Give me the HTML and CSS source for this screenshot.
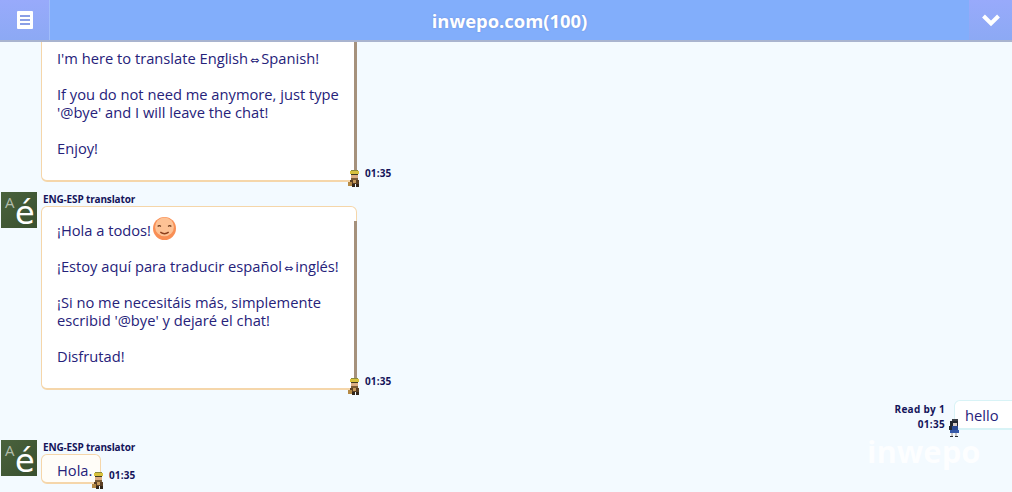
FILE: index.html
```html
<!DOCTYPE html>
<html lang="en">
<head>
    <meta charset="UTF-8">
    <meta name="viewport" content="width=device-width, initial-scale=1.0">
    <title>inwepo.com</title>
    <link rel="stylesheet" href="styles.css">
</head>
<body>
    <!-- little characters shown next to each message -->
    <svg class="defs" width="0" height="0">
        <symbol id="bot-sprite" viewBox="0 0 12 17">
            <rect x="3" y="0" width="7" height="1" fill="#8d8a3a"/>
            <rect x="2" y="1" width="9" height="3" fill="#d8c23e"/>
            <rect x="3" y="4" width="7" height="1" fill="#3d3a20"/>
            <rect x="3" y="5" width="7" height="3" fill="#dcae84"/>
            <rect x="3" y="8" width="7" height="2" fill="#7a5a34"/>
            <rect x="2" y="10" width="9" height="4" fill="#5a3f24"/>
            <rect x="5" y="10" width="3" height="3" fill="#c79a5c"/>
            <rect x="0" y="12" width="4" height="4" fill="#b58a46"/>
            <rect x="4" y="14" width="3" height="3" fill="#33261a"/>
            <rect x="8" y="14" width="3" height="3" fill="#33261a"/>
        </symbol>
        <symbol id="own-sprite" viewBox="0 0 12 18">
            <rect x="4" y="0" width="6" height="2" fill="#3a3f46"/>
            <rect x="2" y="2" width="8" height="5" fill="#23282f"/>
            <rect x="5" y="4" width="4" height="3" fill="#d9cfc8"/>
            <rect x="1" y="7" width="3" height="4" fill="#23282f"/>
            <rect x="4" y="7" width="6" height="5" fill="#2a4a92"/>
            <rect x="2" y="11" width="9" height="3" fill="#3558a8"/>
            <rect x="3" y="14" width="2" height="3" fill="#c8c4c4"/>
            <rect x="7" y="14" width="2" height="3" fill="#c8c4c4"/>
            <rect x="2" y="17" width="3" height="1" fill="#2b2f36"/>
            <rect x="7" y="17" width="3" height="1" fill="#2b2f36"/>
        </symbol>
    </svg>

    <header class="topbar">
        <button class="topbar-btn" aria-label="Menu">
            <svg width="16" height="18" viewBox="0 0 16 18">
                <rect width="16" height="18" rx="1" fill="#fff"/>
                <path d="M3 5h10M3 9h10M3 13h10" stroke="#8a9fe6" stroke-width="2"/>
            </svg>
        </button>
        <h1 class="topbar-title">inwepo.com(100)</h1>
        <button class="topbar-btn" aria-label="Collapse">
            <svg width="20" height="14" viewBox="0 0 20 14">
                <path d="M2.5 3L10 10.5L17.5 3" fill="none" stroke="#fff" stroke-width="4"/>
            </svg>
        </button>
    </header>

    <main class="chat">
        <div class="msg">
            <div class="avatar"><span class="avatar-small">A</span><span class="avatar-big">é</span></div>
            <div class="msg-body">
                <div class="name">ENG-ESP translator</div>
                <div class="msg-line">
                    <div class="bubble bubble-long">
                        <p>Hello everyone!</p>
                        <p>I'm here to translate English<span class="arrows">⇔</span>Spanish!</p>
                        <p>If you do not need me anymore, just type<br>'@bye' and I will leave the chat!</p>
                        <p>Enjoy!</p>
                    </div>
                    <svg class="sprite"><use href="#bot-sprite"/></svg>
                    <span class="time">01:35</span>
                </div>
            </div>
        </div>

        <div class="msg">
            <div class="avatar"><span class="avatar-small">A</span><span class="avatar-big">é</span></div>
            <div class="msg-body">
                <div class="name">ENG-ESP translator</div>
                <div class="msg-line">
                    <div class="bubble bubble-long">
                        <p>¡Hola a todos!<svg class="emoji" width="23" height="23" viewBox="0 0 22 22">
                            <circle cx="11" cy="11" r="11" fill="#f98f55"/>
                            <circle cx="11" cy="9.5" r="9" fill="#fdc295"/>
                            <path d="M4.5 9q1.5-1.5 3 0M14.5 9q1.5-1.5 3 0" fill="none" stroke="#6b3a1c" stroke-width="1.3"/>
                            <path d="M7 14.5q4 3 8 0" fill="none" stroke="#8c3f1c" stroke-width="1.3"/>
                        </svg></p>
                        <p>¡Estoy aquí para traducir español<span class="arrows">⇔</span>inglés!</p>
                        <p>¡Si no me necesitáis más, simplemente<br>escribid '@bye' y dejaré el chat!</p>
                        <p>Disfrutad!</p>
                    </div>
                    <svg class="sprite"><use href="#bot-sprite"/></svg>
                    <span class="time">01:35</span>
                </div>
            </div>
        </div>

        <div class="msg msg-own">
            <div class="own-meta">
                <div>Read by 1</div>
                <div>01:35</div>
            </div>
            <svg class="sprite-own"><use href="#own-sprite"/></svg>
            <div class="bubble bubble-own">hello</div>
        </div>

        <div class="msg">
            <div class="avatar"><span class="avatar-small">A</span><span class="avatar-big">é</span></div>
            <div class="msg-body">
                <div class="name">ENG-ESP translator</div>
                <div class="msg-line">
                    <div class="bubble bubble-short">Hola.</div>
                    <svg class="sprite"><use href="#bot-sprite"/></svg>
                    <span class="time">01:35</span>
                </div>
            </div>
        </div>

        <div class="watermark">inwepo</div>
    </main>
</body>
</html>
```

FILE: styles.css
```css
html, body {
    height: 100%;
}

body {
    margin: 0;
    overflow: hidden;
    display: flex;
    flex-direction: column;
    background-color: #f3faff;
    color: #26227a;
    font-family: 'Open Sans', sans-serif;
    font-size: 14.7px;
    line-height: 18px;
}

.defs {
    position: absolute;
}

/* Top bar */
.topbar {
    flex: none;
    height: 42px;
    display: flex;
    justify-content: space-between;
    align-items: stretch;
    box-sizing: border-box;
    background-color: #82aefb;
    border-bottom: 2px solid #a9b4cf;
    position: relative;
    z-index: 1;
}

.topbar-title {
    margin: 0;
    align-self: center;
    color: #fff;
    font-size: 18.4px;
    font-weight: 700;
    line-height: 39px;
    text-shadow: 0 0 2px #6f8fd8;
}

.topbar-btn {
    width: 50px;
    padding: 0;
    border: none;
    display: flex;
    align-items: center;
    justify-content: center;
    background: linear-gradient(#98aafb, #8ca9f4);
}

.topbar-btn:first-child {
    border-right: 1px solid #a0bdfb;
}

.topbar-btn:last-child {
    width: 43px;
}

/* Chat area, anchored to the bottom so old messages scroll off the top */
.chat {
    flex: 1;
    min-height: 0;
    position: relative;
    overflow: hidden;
    display: flex;
    flex-direction: column;
    justify-content: flex-end;
    gap: 10px;
    padding: 0 0 8px 1px;
}

.msg {
    flex: none;
    display: flex;
    gap: 4px;
}

.msg-own {
    justify-content: flex-end;
    gap: 0;
}

.avatar {
    flex: none;
    width: 36px;
    height: 36px;
    position: relative;
    overflow: hidden;
    background: linear-gradient(135deg, #4a623d, #39502f);
    color: #fff;
}

.avatar-small {
    position: absolute;
    left: 4px;
    top: 1px;
    color: #b3bdac;
    font-size: 15px;
}

.avatar-big {
    position: absolute;
    left: 14px;
    top: 7px;
    font-family: 'DejaVu Sans', sans-serif;
    font-size: 32px;
    line-height: 28px;
}

.name {
    height: 14px;
    padding-left: 2px;
    color: #14145a;
    font-size: 10px;
    font-weight: 700;
    line-height: 14px;
    letter-spacing: -0.15px;
}

.msg-line {
    display: flex;
    align-items: flex-end;
}

.bubble {
    box-sizing: border-box;
    position: relative;
    background-color: #fff;
    border: 1px solid #f5d6aa;
    border-bottom-width: 2px;
    border-radius: 6px;
}

.bubble p {
    margin: 0 0 18px;
}

.bubble p:last-child {
    margin-bottom: 0;
}

.bubble-long {
    width: 316px;
    padding: 14px 15px 23px;
}

/* brown edge down the right side of the long bubbles */
.bubble-long::after {
    content: "";
    position: absolute;
    top: 14px;
    right: -1px;
    bottom: 10px;
    width: 3px;
    background-color: #a5917c;
}

.bubble-short {
    width: 60px;
    height: 30px;
    padding: 6px 0 0 15px;
    background-color: #fffdf8;
}

.bubble-own {
    width: 68px;
    height: 30px;
    margin-right: -10px;
    padding: 5px 0 0 10px;
    border-color: #d8f3f6;
}

.arrows {
    margin: 0 2px;
    font-family: 'DejaVu Sans', sans-serif;
    font-size: 11px;
    line-height: 1;
}

.emoji {
    margin: -8px 0 -4px 2px;
    vertical-align: baseline;
}

.sprite {
    flex: none;
    width: 12px;
    height: 17px;
    position: relative;
    margin: 0 0 -5px -9px;
}

.time {
    margin: 0 0 3px 5px;
    color: #14145a;
    font-size: 10px;
    font-weight: 700;
    line-height: 12px;
    letter-spacing: 0.15px;
}

.own-meta {
    align-self: flex-end;
    margin-bottom: -2px;
    color: #14145a;
    font-size: 10px;
    font-weight: 700;
    line-height: 15px;
    letter-spacing: 0.3px;
    text-align: right;
}

.sprite-own {
    flex: none;
    width: 12px;
    height: 18px;
    position: relative;
    z-index: 1;
    align-self: flex-end;
    margin: 0 -6px -7px 3px;
}

.watermark {
    position: absolute;
    left: 867px;
    top: 387px;
    color: #fff;
    font-size: 31px;
    font-weight: 700;
    line-height: 44px;
    opacity: 0.85;
}
```
